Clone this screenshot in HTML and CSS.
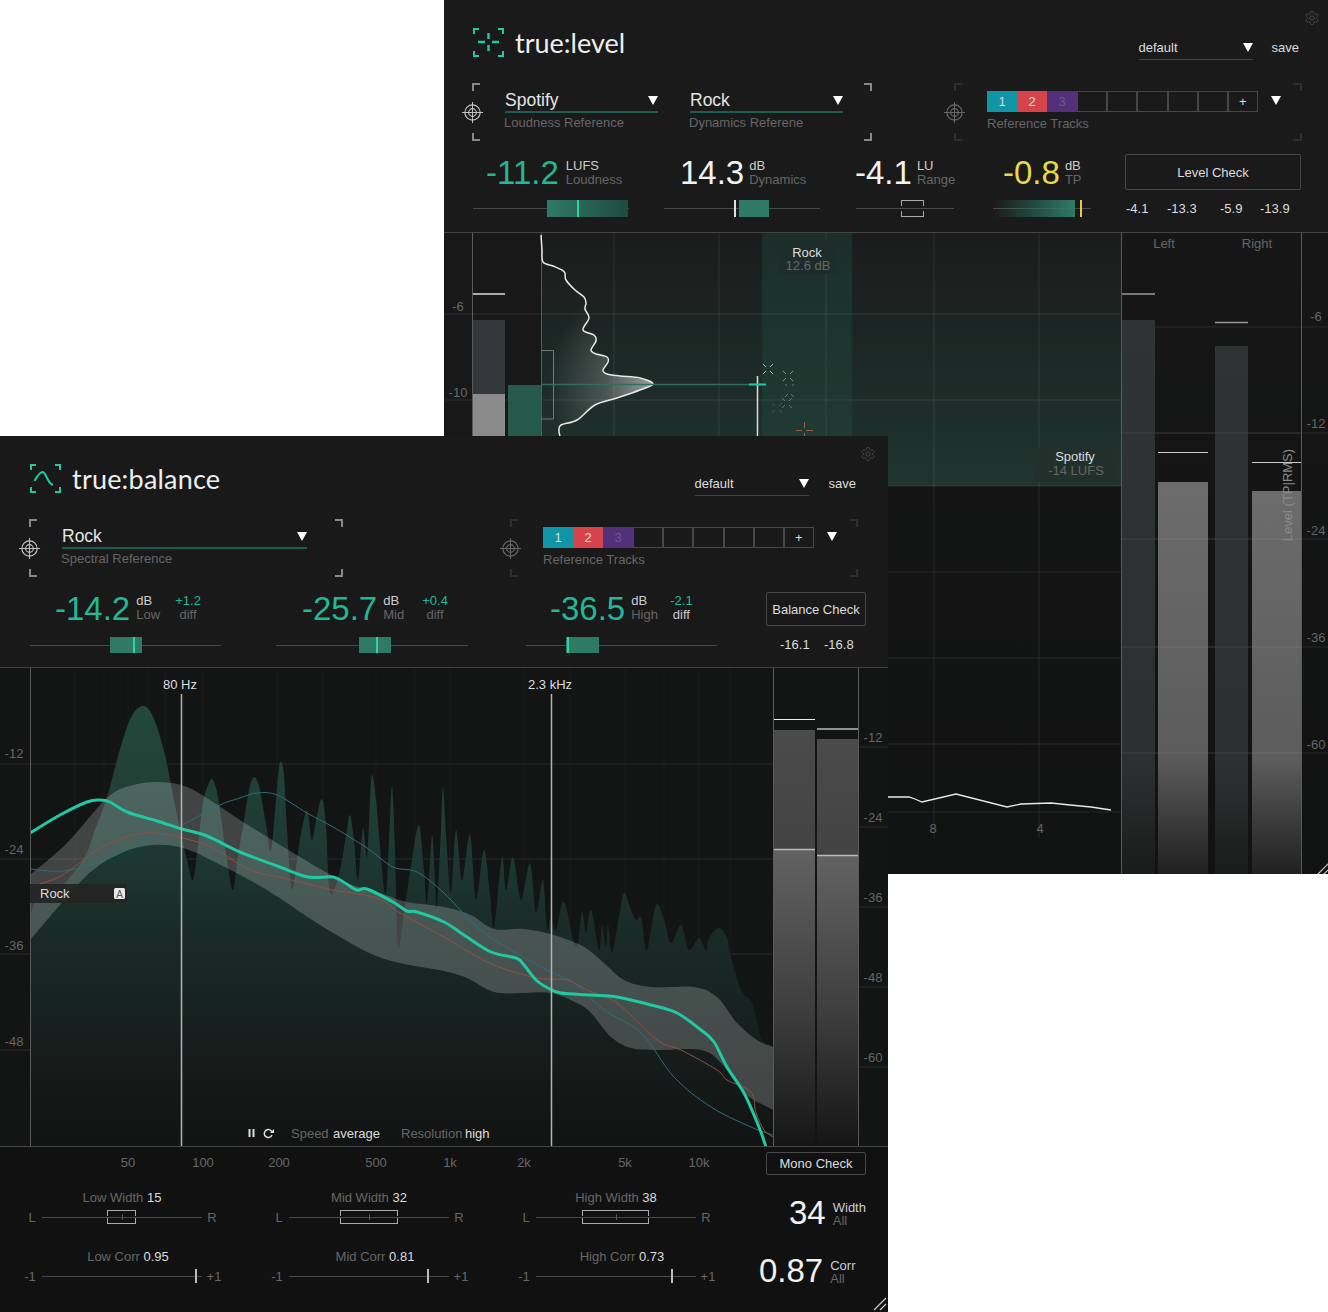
FILE: index.html
```html
<!DOCTYPE html>
<html lang="en">
<head>
    <meta charset="UTF-8">
    <title>true:level and true:balance</title>
    <link rel="stylesheet" href="styles.css">
</head>
<body>
    <svg class="sprite" width="0" height="0">
        <symbol id="target" viewBox="0 0 24 24">
            <circle cx="12" cy="12" r="8" fill="none" stroke="currentColor" stroke-width="1.2"/>
            <circle cx="12" cy="12" r="4" fill="none" stroke="currentColor" stroke-width="1.2"/>
            <path d="M12 1v22M1 12h22" stroke="currentColor" stroke-width="1"/>
        </symbol>
        <symbol id="gear" viewBox="0 0 24 24">
            <path fill="none" stroke="currentColor" stroke-width="1.3" d="M12.22 2h-.44a2 2 0 0 0-2 2v.18a2 2 0 0 1-1 1.73l-.43.25a2 2 0 0 1-2 0l-.15-.08a2 2 0 0 0-2.73.73l-.22.38a2 2 0 0 0 .73 2.73l.15.1a2 2 0 0 1 1 1.72v.51a2 2 0 0 1-1 1.74l-.15.09a2 2 0 0 0-.73 2.73l.22.38a2 2 0 0 0 2.73.73l.15-.08a2 2 0 0 1 2 0l.43.25a2 2 0 0 1 1 1.73V20a2 2 0 0 0 2 2h.44a2 2 0 0 0 2-2v-.18a2 2 0 0 1 1-1.73l.43-.25a2 2 0 0 1 2 0l.15.08a2 2 0 0 0 2.73-.73l.22-.39a2 2 0 0 0-.73-2.73l-.15-.08a2 2 0 0 1-1-1.74v-.5a2 2 0 0 1 1-1.74l.15-.09a2 2 0 0 0 .73-2.73l-.22-.38a2 2 0 0 0-2.73-.73l-.15.08a2 2 0 0 1-2 0l-.43-.25a2 2 0 0 1-1-1.73V4a2 2 0 0 0-2-2z"/>
            <circle cx="12" cy="12" r="3.2" fill="none" stroke="currentColor" stroke-width="1.3"/>
        </symbol>
        <symbol id="grip" viewBox="0 0 14 14">
            <path d="M1 13L13 1M7 13L13 7" stroke="#ccc" stroke-width="1.2"/>
        </symbol>
    </svg>

    <!-- true:level window, sits behind -->
    <section class="win win-level">
        <div class="head">
            <div class="top">
                <div class="logo">
                    <svg width="31" height="29" viewBox="0 0 31 29" fill="none" stroke="#1fc9a1" stroke-width="2">
                        <path d="M1 6V1h5M25 1h5v5M1 23v5h5M25 28h5v-5"/>
                        <path d="M5 14h7M19 14h7M15.500 5v6M15.500 17v6" stroke-width="2.400"/>
                    </svg>
                    <span class="logo-name">true:level</span>
                </div>
                <div class="top-right">
                    <svg class="gear"><use href="#gear"/></svg>
                    <div class="preset-row">
                        <div class="preset"><span>default</span><i class="tri"></i></div>
                        <span class="save">save</span>
                    </div>
                </div>
            </div>

            <div class="refs">
                <div class="corners box-level-a">
                    <svg class="target"><use href="#target"/></svg>
                    <div class="sel">
                        <div class="sel-row"><span>Spotify</span><i class="tri"></i></div>
                        <div class="cap">Loudness Reference</div>
                    </div>
                    <div class="sel">
                        <div class="sel-row"><span>Rock</span><i class="tri"></i></div>
                        <div class="cap">Dynamics Referene</div>
                    </div>
                </div>
                <div class="corners dim box-tracks">
                    <svg class="target"><use href="#target"/></svg>
                    <div class="track-wrap">
                        <div class="tracks">
                            <span class="t1">1</span><span class="t2">2</span><span class="t3">3</span>
                            <span></span><span></span><span></span><span></span><span></span>
                            <span class="add">+</span>
                        </div>
                        <div class="cap">Reference Tracks</div>
                    </div>
                    <i class="tri"></i>
                </div>
            </div>

            <div class="reads reads-level">
                <div class="read">
                    <span class="num teal">-11.2</span>
                    <div class="unit"><b>LUFS</b><span>Loudness</span></div>
                </div>
                <div class="read">
                    <span class="num">14.3</span>
                    <div class="unit"><b>dB</b><span>Dynamics</span></div>
                </div>
                <div class="read">
                    <span class="num">-4.1</span>
                    <div class="unit"><b>LU</b><span>Range</span></div>
                </div>
                <div class="read">
                    <span class="num yellow">-0.8</span>
                    <div class="unit"><b>dB</b><span>TP</span></div>
                </div>
                <button class="check">Level Check</button>
            </div>

            <div class="bars bars-level">
                <div class="slider" style="width:156px"><i class="fill fade-r" style="left:74px;width:81px"></i><i class="tick teal-bg" style="left:104px"></i></div>
                <div class="slider" style="width:156px"><i class="fill" style="left:75px;width:30px"></i><i class="tick" style="left:70px"></i></div>
                <div class="slider" style="width:98px"><i class="range" style="left:45px;width:23px"></i></div>
                <div class="slider" style="width:98px"><i class="fill fade-l" style="left:0;width:82px"></i><i class="tick yellow-bg" style="left:87px"></i></div>
                <div class="vals vals-level"><span>-4.1</span><span>-13.3</span><span>-5.9</span><span>-13.9</span></div>
            </div>
        </div>

        <svg class="plot" width="884" height="641" viewBox="444 233 884 641">
            <defs>
                <linearGradient id="zone" x1="0" y1="0" x2="0" y2="1">
                    <stop offset="0" stop-color="#1a1c1c"/>
                    <stop offset="1" stop-color="#1f352f"/>
                </linearGradient>
                <linearGradient id="rockband" x1="0" y1="0" x2="0" y2="1">
                    <stop offset="0" stop-color="#1b2f2a"/>
                    <stop offset="1" stop-color="#1f3d34"/>
                </linearGradient>
                <linearGradient id="below" x1="0" y1="0" x2="0" y2="1">
                    <stop offset="0" stop-color="#161616"/>
                    <stop offset="1" stop-color="#111212"/>
                </linearGradient>
                <radialGradient id="hump" gradientUnits="userSpaceOnUse" cx="653" cy="384" r="105">
                    <stop offset="0" stop-color="#fff" stop-opacity=".55"/>
                    <stop offset=".45" stop-color="#fff" stop-opacity=".2"/>
                    <stop offset="1" stop-color="#fff" stop-opacity="0"/>
                </radialGradient>
                <linearGradient id="rmsL" x1="0" y1="0" x2="0" y2="1">
                    <stop offset="0" stop-color="#6c6c6c"/>
                    <stop offset=".7" stop-color="#5c5c5c"/>
                    <stop offset="1" stop-color="#202020"/>
                </linearGradient>
                <linearGradient id="tpL" x1="0" y1="0" x2="0" y2="1">
                    <stop offset="0" stop-color="#303334"/>
                    <stop offset=".8" stop-color="#2d3031"/>
                    <stop offset="1" stop-color="#1a1b1b"/>
                </linearGradient>
            </defs>
            <rect x="444" y="233" width="884" height="641" fill="url(#below)"/>
            <rect x="444" y="233" width="97" height="641" fill="#181818"/>
            <rect x="541" y="233" width="580" height="253" fill="url(#zone)"/>
            <rect x="762" y="233" width="90" height="253" fill="url(#rockband)"/>

            <!-- grid -->
            <path class="grid" d="M444 314H1121M444 400H1121M541 486H1121M541 572H1121M888 658H1121M888 744H1121M888 812H1121"/>
            <path class="grid" d="M614 233V874M719 233V874M826 233V874M934 233V838M1039 233V838"/>
            <path class="grid" d="M1121 327H1328M1121 433H1328M1121 539H1328M1121 647H1328M1121 753H1328"/>
            <path class="axis" d="M472.500 233V874M541.500 233V874M1121.500 233V874M1301.500 233V874"/>

            <!-- loudness bars on the left -->
            <rect x="473" y="320" width="32" height="74" fill="#34383a"/>
            <rect x="473" y="394" width="32" height="42" fill="#8b8b8b"/>
            <rect x="508" y="385" width="33" height="51" fill="#27594b"/>
            <path d="M473 294H505" stroke="#ddd" stroke-width="1.500"/>

            <!-- histogram -->
            <path class="smooth" fill="url(#hump)" d="M541 235L543 262L553 266L564 271L566 280L575 290L584 297L586 310L589 318L583 330L594 335L596 341L591 350L607 357L603 370L614 375L635 378L653 384L617 398L595 405L577 420L561 425L559 436L541 436Z"/>
            <path class="smooth" fill="none" stroke="#e8e8e8" stroke-width="1.500" d="M541 235L542 250L543 262L553 266L562 270L565 273L566 280L575 290L584 297L586 303L585 309L589 318L583 330L594 335L596 341L591 350L596 354L607 357L608 362L603 370L607 374L620 376L640 378L653 384L640 390L617 398L595 405L577 420L561 425L559 431L560 436"/>
            <path d="M541 350.500H553.500V419H541" fill="none" stroke="#777" stroke-width="1"/>
            <path d="M541 384.500H762" stroke="#2f6f5d" stroke-width="1.500"/>
            <path d="M757.500 376V436" stroke="#ddd" stroke-width="1.500"/>
            <path d="M749 384.500H766" stroke="#1fc9a1" stroke-width="2"/>

            <!-- history markers -->
            <path class="marks" opacity=".85" d="M763 364l3 3M773 364l-3 3M763 374l3-3M773 374l-3-3"/>
            <path class="marks" opacity=".6" d="M783 371l3 3M793 371l-3 3M783 381l3-3M793 381l-3-3"/>
            <path class="marks" opacity=".45" d="M785 384l2 2M794 384l-2 2M785 397l3-3M794 397l-3-3"/>
            <path class="marks" opacity=".4" d="M782 398l3 3M792 398l-3 3M782 408l3-3M792 408l-3-3"/>
            <path class="marks" opacity=".2" d="M772 403l3 3M782 403l-3 3M772 413l3-3M782 413l-3-3"/>
            <path d="M796 430.500H802M806 430.500H813M804.500 422V428M804.500 433V440" stroke="#9a5a48" stroke-width="1" fill="none"/>

            <!-- labels sitting on the graph -->
            <rect x="778" y="240" width="58" height="34" fill="#1f2d2a"/>
            <text class="lab lt" x="807" y="257" text-anchor="middle">Rock</text>
            <text class="lab dk" x="808" y="270" text-anchor="middle">12.6 dB</text>
            <rect x="1034" y="448" width="82" height="34" fill="#22302c"/>
            <text class="lab lt" x="1075" y="461" text-anchor="middle">Spotify</text>
            <text class="lab dk" x="1076" y="475" text-anchor="middle">-14 LUFS</text>

            <text class="lab dk" x="458" y="311" text-anchor="middle">-6</text>
            <text class="lab dk" x="458" y="397" text-anchor="middle">-10</text>

            <path fill="none" stroke="#e8e8e8" stroke-width="1.300" d="M888 797L909 797L915 799L922 802L956 794L1007 807L1021 804L1051 803L1070 805L1091 807L1111 810"/>
            <text class="lab dk" x="933" y="833" text-anchor="middle">8</text>
            <text class="lab dk" x="1040" y="833" text-anchor="middle">4</text>

            <!-- output meters -->
            <rect x="1122" y="320" width="33" height="554" fill="url(#tpL)"/>
            <rect x="1158" y="482" width="50" height="392" fill="url(#rmsL)"/>
            <rect x="1215" y="346" width="33" height="528" fill="url(#tpL)"/>
            <rect x="1252" y="491" width="49" height="383" fill="url(#rmsL)"/>
            <path d="M1122 294H1155M1215 322.500H1248" stroke="#999" stroke-width="1.500"/>
            <path d="M1158 452.500H1208M1252 462.500H1301" stroke="#ccc" stroke-width="1"/>
            <path class="grid" d="M1121 433H1301M1121 539H1301M1121 647H1301M1121 753H1301"/>
            <text class="lab dk" x="1164" y="248" text-anchor="middle">Left</text>
            <text class="lab dk" x="1257" y="248" text-anchor="middle">Right</text>
            <text class="lab dk" x="1316" y="321" text-anchor="middle">-6</text>
            <text class="lab dk" x="1316" y="428" text-anchor="middle">-12</text>
            <text class="lab dk" x="1316" y="535" text-anchor="middle">-24</text>
            <text class="lab dk" x="1316" y="642" text-anchor="middle">-36</text>
            <text class="lab dk" x="1316" y="749" text-anchor="middle">-60</text>
            <text class="lab side" transform="rotate(-90 1292 495)" x="1292" y="495" text-anchor="middle">Level (TP|RMS)</text>
            <use href="#grip" x="1316" y="862" width="14" height="14"/>
        </svg>
    </section>

    <!-- true:balance window, on top -->
    <section class="win win-balance">
        <div class="head head-balance">
            <div class="top">
                <div class="logo">
                    <svg width="31" height="29" viewBox="0 0 31 29" fill="none" stroke="#1fc9a1" stroke-width="2">
                        <path d="M1 6V1h5M25 1h5v5M1 23v5h5M25 28h5v-5"/>
                        <path d="M5 16C8 11 10 8 12.500 8C16 8 17 18 22 20.500" stroke-width="2.200" stroke-linecap="round"/>
                    </svg>
                    <span class="logo-name">true:balance</span>
                </div>
                <div class="top-right">
                    <svg class="gear"><use href="#gear"/></svg>
                    <div class="preset-row">
                        <div class="preset"><span>default</span><i class="tri"></i></div>
                        <span class="save">save</span>
                    </div>
                </div>
            </div>

            <div class="refs">
                <div class="corners box-balance-a">
                    <svg class="target"><use href="#target"/></svg>
                    <div class="sel sel-wide">
                        <div class="sel-row"><span>Rock</span><i class="tri"></i></div>
                        <div class="cap">Spectral Reference</div>
                    </div>
                </div>
                <div class="corners dim box-tracks">
                    <svg class="target"><use href="#target"/></svg>
                    <div class="track-wrap">
                        <div class="tracks">
                            <span class="t1">1</span><span class="t2">2</span><span class="t3">3</span>
                            <span></span><span></span><span></span><span></span><span></span>
                            <span class="add">+</span>
                        </div>
                        <div class="cap">Reference Tracks</div>
                    </div>
                    <i class="tri"></i>
                </div>
            </div>

            <div class="reads reads-balance">
                <div class="read">
                    <span class="num teal">-14.2</span>
                    <div class="unit fixed"><b>dB</b><span>Low</span></div>
                    <div class="unit diff"><b class="teal">+1.2</b><span>diff</span></div>
                </div>
                <div class="read">
                    <span class="num teal">-25.7</span>
                    <div class="unit fixed"><b>dB</b><span>Mid</span></div>
                    <div class="unit diff"><b class="teal">+0.4</b><span>diff</span></div>
                </div>
                <div class="read">
                    <span class="num teal">-36.5</span>
                    <div class="unit fixed"><b>dB</b><span>High</span></div>
                    <div class="unit diff"><b class="teal">-2.1</b><span class="on">diff</span></div>
                </div>
                <button class="check">Balance Check</button>
            </div>

            <div class="bars bars-balance">
                <div class="slider" style="width:191px"><i class="fill" style="left:80px;width:32px"></i><i class="tick teal-bg" style="left:103px"></i></div>
                <div class="slider" style="width:192px"><i class="fill" style="left:83px;width:32px"></i><i class="tick teal-bg" style="left:100px"></i></div>
                <div class="slider" style="width:191px"><i class="fill" style="left:40px;width:33px"></i><i class="tick teal-bg" style="left:41px"></i></div>
                <div class="vals vals-balance"><span>-16.1</span><span>-16.8</span></div>
            </div>
        </div>

        <svg class="plot" width="888" height="478" viewBox="0 668 888 478">
            <defs>
                <linearGradient id="spec" gradientUnits="userSpaceOnUse" x1="0" y1="700" x2="0" y2="1146">
                    <stop offset="0" stop-color="#24493c"/>
                    <stop offset=".35" stop-color="#1d3832"/>
                    <stop offset=".5" stop-color="#1a2c28"/>
                    <stop offset=".75" stop-color="#161f1d"/>
                    <stop offset="1" stop-color="#121313"/>
                </linearGradient>
                <linearGradient id="upper" x1="0" y1="0" x2="0" y2="1">
                    <stop offset="0" stop-color="#4b4b4b"/>
                    <stop offset="1" stop-color="#434343"/>
                </linearGradient>
                <linearGradient id="lower" x1="0" y1="0" x2="0" y2="1">
                    <stop offset="0" stop-color="#626262"/>
                    <stop offset=".55" stop-color="#3d3d3d"/>
                    <stop offset="1" stop-color="#151515"/>
                </linearGradient>
                <clipPath id="inner">
                    <rect x="30" y="668" width="743" height="478"/>
                </clipPath>
            </defs>
            <rect x="0" y="668" width="888" height="478" fill="#131414"/>

            <path class="grid faint" d="M75 668V1146M104 668V1146M128 668V1146M148 668V1146M165 668V1146M203 668V1146M277 668V1146M323 668V1146M376 668V1146M415 668V1146M450 668V1146M524 668V1146M570 668V1146M625 668V1146M664 668V1146M699 668V1146M730 668V1146"/>
            <path class="grid" d="M0 764H773M0 859H773M0 954H773M0 1050H773"/>
            <path class="grid" d="M773 747H888M773 827H888M773 907H888M773 987H888M773 1067H888"/>

            <g clip-path="url(#inner)">
                <!-- spectrum -->
                <path class="smooth" fill="url(#spec)" d="M30 1170L30 925L55 895L83 860L95 830L107 797L117 760L127 727L135 711L143 706L150 711L157 727L165 755L170 780L176 810L180 830L187 860L193 880L198 845L203 803L208 785L212 779L216 788L220 810L227 860L233 890L238 855L243 827L249 790L254 777L259 786L263 807L267 830L271 850L276 800L279 768L281 762L284 775L287 830L292 890L299 845L305 815L308 813L312 840L317 815L322 799L326 825L330 893L340 870L346 835L350 815L354 840L358 880L363 828L367 857L370 800L372 775L376 800L385 893L389 840L392 787L395 850L398 947L405 905L412 860L419 825L424 870L427 903L432 836L435 880L437 907L441 830L443 788L447 850L451 893L456 830L462 880L470 835L476 900L484 850L490 895L494 927L502 857L506 890L513 857L521 900L530 863L536 913L543 880L547 930L551 917L556 930L564 902L576 947L582 912L586 933L591 910L599 950L602 925L606 947L608 925L612 952L619 917L624 893L631 910L636 920L641 918L647 950L656 905L664 920L671 943L681 925L689 950L699 938L706 950L709 938L719 928L727 938L731 957L741 990L752 1003L761 1037L773 1047L790 1060L790 1170Z"/>

                <!-- reference band -->
                <path class="smooth" fill="#fff" fill-opacity=".2" d="M10 892L30 875L67 843L107 798L133 785L160 782L187 787L213 802L240 820L277 843L317 867L347 883L380 893L407 902L444 907L471 915L494 929L524 929L554 935L584 947L604 963L624 980L651 987L694 987L717 997L737 1023L757 1040L773 1047L790 1054L790 1120L773 1110L744 1093L721 1063L701 1050L657 1050L631 1048L611 1037L591 1013L577 1003L551 993L524 993L494 992L467 978L444 971L400 963L367 952L317 923L267 890L217 863L183 848L153 845L123 852L93 870L67 897L30 940L10 962Z"/>

                <path class="smooth" fill="none" stroke="#2f6d78" stroke-width="1" d="M30 869L63 871L100 862L143 842L182 825L220 805L240 798L257 793L277 795L307 813L333 827L367 848L393 867L417 872L444 893L477 927L511 950L551 972L574 983L604 1010L641 1033L674 1077L711 1107L751 1127L773 1135"/>
                <path class="smooth" fill="none" stroke="#8f5046" stroke-width="1" d="M30 887L57 878L77 865L100 848L133 835L157 833L183 838L213 848L250 870L283 878L333 890L377 898L400 913L444 937L487 962L524 975L544 979L567 980L587 990L617 1003L657 1040L681 1050L717 1070L727 1080L751 1092L756 1113L764 1130L773 1137"/>
                <path class="smooth" fill="none" stroke="#1fc9a1" stroke-width="3" d="M30 833L60 815L87 802L100 800L110 802L127 812L157 821L182 829L207 836L240 852L280 867L308 877L333 877L345 883L357 890L367 889L393 902L407 911L417 912L444 922L464 935L491 952L516 958L524 965L536 980L548 988L561 993L591 995L617 997L651 1005L677 1013L701 1030L714 1042L727 1067L744 1093L759 1127L766 1147"/>
            </g>

            <path class="axis" d="M30.500 668V1146M773.500 668V1146M858.500 668V1146"/>
            <path d="M181.500 694V1146M551.500 694V1146" stroke="#b4b4b4" stroke-width="1.500"/>
            <text class="lab lt" x="180" y="689" text-anchor="middle">80 Hz</text>
            <text class="lab lt" x="550" y="689" text-anchor="middle">2.3 kHz</text>

            <rect x="30" y="884" width="97" height="19" fill="#242424" opacity=".92"/>
            <text class="lab lt" x="40" y="898">Rock</text>
            <rect x="114" y="888" width="11" height="11" rx="1.500" fill="#e8e8e8"/>
            <text class="lab tiny" x="119.500" y="897.500" text-anchor="middle">A</text>

            <!-- meters -->
            <rect x="774" y="730" width="41" height="119" fill="url(#upper)"/>
            <rect x="774" y="849" width="41" height="297" fill="url(#lower)"/>
            <rect x="817" y="739" width="41" height="117" fill="url(#upper)"/>
            <rect x="817" y="856" width="41" height="290" fill="url(#lower)"/>
            <path d="M774 719.500H815" stroke="#eee" stroke-width="1.200"/>
            <path d="M817 729H858M774 849.500H815M817 855.500H858" stroke="#bbb" stroke-width="1.600"/>
            <text class="lab dk" x="14" y="758" text-anchor="middle">-12</text>
            <text class="lab dk" x="14" y="854" text-anchor="middle">-24</text>
            <text class="lab dk" x="14" y="950" text-anchor="middle">-36</text>
            <text class="lab dk" x="14" y="1046" text-anchor="middle">-48</text>
            <text class="lab dk" x="873" y="742" text-anchor="middle">-12</text>
            <text class="lab dk" x="873" y="822" text-anchor="middle">-24</text>
            <text class="lab dk" x="873" y="902" text-anchor="middle">-36</text>
            <text class="lab dk" x="873" y="982" text-anchor="middle">-48</text>
            <text class="lab dk" x="873" y="1062" text-anchor="middle">-60</text>

            <!-- transport -->
            <path d="M249.500 1129V1137M253.500 1129V1137" stroke="#ddd" stroke-width="2"/>
            <path d="M272 1132a4 4 0 1 0 0 3" fill="none" stroke="#ddd" stroke-width="1.500"/>
            <path d="M270 1133h4v-4z" fill="#ddd"/>
            <text class="lab dk" x="291" y="1138">Speed</text>
            <text class="lab lt" x="333" y="1138">average</text>
            <text class="lab dk" x="401" y="1138">Resolution</text>
            <text class="lab lt" x="465" y="1138">high</text>
        </svg>

        <div class="foot">
            <div class="freq">
                <span class="fq" style="left:128px">50</span>
                <span class="fq" style="left:203px">100</span>
                <span class="fq" style="left:279px">200</span>
                <span class="fq" style="left:376px">500</span>
                <span class="fq" style="left:450px">1k</span>
                <span class="fq" style="left:524px">2k</span>
                <span class="fq" style="left:625px">5k</span>
                <span class="fq" style="left:699px">10k</span>
                <button class="check mono">Mono Check</button>
            </div>
            <div class="stereo">
                <div class="ctl">
                    <div class="ctl-name">Low Width <b>15</b></div>
                    <div class="ctl-row"><span>L</span><div class="thin"><i class="range" style="left:65px;width:29px"></i><i class="mini" style="left:80px"></i></div><span>R</span></div>
                </div>
                <div class="ctl">
                    <div class="ctl-name">Mid Width <b>32</b></div>
                    <div class="ctl-row"><span>L</span><div class="thin"><i class="range" style="left:51px;width:58px"></i><i class="mini" style="left:80px"></i></div><span>R</span></div>
                </div>
                <div class="ctl">
                    <div class="ctl-name">High Width <b>38</b></div>
                    <div class="ctl-row"><span>L</span><div class="thin"><i class="range" style="left:46px;width:67px"></i><i class="mini" style="left:80px"></i></div><span>R</span></div>
                </div>
                <div class="total total-width">
                    <span class="num">34</span>
                    <div class="unit"><b>Width</b><span>All</span></div>
                </div>
                <div class="ctl corr">
                    <div class="ctl-name">Low Corr <b>0.95</b></div>
                    <div class="ctl-row"><span>-1</span><div class="thin"><i class="mark" style="left:153px"></i></div><span>+1</span></div>
                </div>
                <div class="ctl corr">
                    <div class="ctl-name">Mid Corr <b>0.81</b></div>
                    <div class="ctl-row"><span>-1</span><div class="thin"><i class="mark" style="left:138px"></i></div><span>+1</span></div>
                </div>
                <div class="ctl corr">
                    <div class="ctl-name">High Corr <b>0.73</b></div>
                    <div class="ctl-row"><span>-1</span><div class="thin"><i class="mark" style="left:135px"></i></div><span>+1</span></div>
                </div>
                <div class="total total-corr">
                    <span class="num">0.87</span>
                    <div class="unit"><b>Corr</b><span>All</span></div>
                </div>
            </div>
            <svg class="grip"><use href="#grip"/></svg>
        </div>
    </section>

    <script src="charts.js"></script>
</body>
</html>
```

FILE: styles.css
```css
/* General Reset */
* {
    margin: 0;
    padding: 0;
    box-sizing: border-box;
}

body {
    position: relative;
    width: 1328px;
    height: 1312px;
    overflow: hidden;
    background: #fff;
    font-family: 'Liberation Sans', Arial, sans-serif;
    font-size: 13px;
    color: #ddd;
}

.sprite {
    position: absolute;
}

i {
    display: block;
    font-style: normal;
}

/* the two plugin windows float on the white page */
.win {
    position: absolute;
    overflow: hidden;
    background: #191919;
}

.win-level {
    left: 444px;
    top: 0;
    width: 884px;
    height: 874px;
}

.win-balance {
    left: 0;
    top: 436px;
    width: 888px;
    height: 876px;
    background: #111;
}

.head {
    height: 233px;
    background: #1a1a1b;
    border-bottom: 1px solid #444;
}

.head-balance {
    height: 232px;
    background: #191919;
}

.plot {
    display: block;
}

/* top bar */
.top {
    display: flex;
    justify-content: space-between;
    height: 83px;
    padding: 10px 8px 0 29px;
}

.head-balance .top {
    padding: 10px 12px 0 30px;
}

.logo {
    display: flex;
    align-items: center;
    gap: 11px;
    height: 29px;
    margin-top: 18px;
}

.logo-name {
    font-family: 'Lato', sans-serif;
    font-size: 27px;
    font-weight: 400;
    color: #eee;
}

.head-balance .logo-name {
    letter-spacing: .2px;
}

.top-right {
    display: flex;
    flex-direction: column;
    align-items: flex-end;
}

.gear {
    width: 16px;
    height: 16px;
    color: #4c4c4c;
}

.preset-row {
    display: flex;
    align-items: flex-start;
    gap: 19px;
    margin: 14px 21px 0 0;
}

.head-balance .preset-row {
    gap: 20px;
    margin-right: 20px;
}

.preset {
    display: flex;
    justify-content: space-between;
    width: 114px;
    height: 20px;
    border-bottom: 1px solid #444;
}

.tri {
    width: 0;
    height: 0;
    margin-top: 3px;
    border-left: 5px solid transparent;
    border-right: 5px solid transparent;
    border-top: 9px solid #fff;
}

.save {
    line-height: 15px;
}

/* reference selectors */
.refs {
    display: flex;
    height: 58px;
    padding-left: 28px;
}

.head-balance .refs {
    padding-left: 29px;
}

.corners {
    --c: #888;
    display: flex;
    background:
        linear-gradient(var(--c), var(--c)) 0 0 / 8px 2px no-repeat,
        linear-gradient(var(--c), var(--c)) 0 0 / 2px 8px no-repeat,
        linear-gradient(var(--c), var(--c)) 100% 0 / 8px 2px no-repeat,
        linear-gradient(var(--c), var(--c)) 100% 0 / 2px 8px no-repeat,
        linear-gradient(var(--c), var(--c)) 0 100% / 8px 2px no-repeat,
        linear-gradient(var(--c), var(--c)) 0 100% / 2px 8px no-repeat,
        linear-gradient(var(--c), var(--c)) 100% 100% / 8px 2px no-repeat,
        linear-gradient(var(--c), var(--c)) 100% 100% / 2px 8px no-repeat;
}

.corners.dim {
    --c: #2f2f2f;
}

.box-level-a {
    width: 400px;
}

.box-balance-a {
    width: 314px;
}

.box-tracks {
    width: 348px;
    margin-left: 82px;
}

.box-balance-a + .box-tracks {
    margin-left: 167px;
    width: 348px;
}

.target {
    flex: none;
    width: 23px;
    height: 23px;
    margin: 18px 21px 0 -11px;
    color: #c4c4c4;
}

.dim .target {
    color: #6a6a6a;
}

.sel {
    flex: none;
    width: 153px;
    margin-right: 32px;
    padding-top: 7px;
}

.sel-wide {
    width: 245px;
}

.sel-row {
    display: flex;
    justify-content: space-between;
    height: 23px;
    font-size: 17.500px;
    line-height: 20px;
    color: #e4e4e4;
    border-bottom: 2px solid #1b5d4e;
}

.sel-row .tri {
    margin-top: 6px;
}

.cap {
    margin: 2px 0 0 -1px;
    line-height: 16px;
    color: #666;
}

.track-wrap {
    flex: none;
    padding-top: 8px;
}

.track-wrap .cap {
    margin: 4px 0 0;
}

.tracks {
    display: grid;
    grid-template-columns: repeat(9, 30.100px);
    height: 21px;
}

.tracks span {
    border: 1px solid #474747;
    text-align: center;
    line-height: 19px;
}

.tracks .t1 {
    background: #0f95a6;
    border-color: #0f95a6;
}

.tracks .t2 {
    background: #d6434b;
    border-color: #d6434b;
}

.tracks .t3 {
    background: #54307a;
    border-color: #54307a;
    color: #6f5a8c;
}

.box-tracks .tri {
    margin: 13px 0 0 13px;
}

/* big readouts */
.reads {
    display: grid;
    height: 34px;
    margin-top: 13px;
}

.reads-level {
    grid-template-columns: 194px 175px 148px 122px 176px;
    padding-left: 42px;
}

.reads-level .read {
    gap: 5px;
    padding-top: 2px;
}

.reads-level .read:first-child {
    gap: 7px;
}

.reads-balance {
    grid-template-columns: 247px 248px 216px 100px;
    height: 33px;
    margin-top: 15px;
    padding-left: 55px;
}

.reads-balance .read {
    gap: 6px;
}

.reads-balance .unit {
    margin-top: -3px;
}

.read,
.total {
    display: flex;
    align-items: center;
    gap: 8px;
}

.num {
    font-size: 33px;
    line-height: 34px;
    color: #f2f2f2;
}

.num.teal {
    color: #22b795;
}

.num.yellow {
    color: #e6d84f;
}

.unit {
    display: flex;
    flex-direction: column;
    line-height: 14px;
}

.unit b {
    font-weight: 400;
    color: #ccc;
}

.unit span {
    color: #666;
}

.unit b.teal {
    color: #22b795;
}

.unit .on {
    color: #ccc;
}

.fixed {
    width: 33px;
}

.diff {
    align-items: center;
}

.check {
    background: none;
    border: 1px solid #484848;
    border-radius: 2px;
    font: inherit;
    color: #ddd;
}

/* slider rows */
.bars {
    display: grid;
    height: 16px;
    margin-top: 12px;
}

.bars-level {
    grid-template-columns: 191px 192px 137px 132px 1fr;
    padding-left: 29px;
}

.bars-balance {
    grid-template-columns: 246px 250px 254px 1fr;
    height: 15px;
    padding-left: 30px;
}

.slider {
    position: relative;
    height: 100%;
    background: linear-gradient(#484848, #484848) 0 50% / 100% 1px no-repeat;
}

.slider i,
.thin i {
    position: absolute;
}

.fill {
    top: 0;
    height: 100%;
    background: #2e7a65;
}

.fade-r {
    background: linear-gradient(90deg, #2e7a65, #1f4a3f);
}

.fade-l {
    background: linear-gradient(90deg, rgba(46, 122, 101, 0), #2e7a65);
}

.tick {
    top: 0;
    width: 2px;
    height: 100%;
    background: #e0e0e0;
}

.teal-bg {
    background: #2ad3aa;
}

.yellow-bg {
    background: #e6c84f;
}

.range {
    top: 0;
    height: 100%;
    border-top: 1px solid #aaa;
    border-bottom: 1px solid #aaa;
    background:
        linear-gradient(#aaa, #aaa) 0 0 / 1px 5px no-repeat,
        linear-gradient(#aaa, #aaa) 100% 0 / 1px 5px no-repeat,
        linear-gradient(#aaa, #aaa) 0 100% / 1px 5px no-repeat,
        linear-gradient(#aaa, #aaa) 100% 100% / 1px 5px no-repeat;
}

.vals {
    display: grid;
    padding-top: 1px;
    line-height: 16px;
}

.vals-level {
    grid-template-columns: 41px 53px 40px auto;
    padding-left: 1px;
}

.vals-balance {
    grid-template-columns: 44px auto;
    padding-top: 0;
}

/* svg bits */
.grid {
    fill: none;
    stroke: #fff;
    stroke-opacity: .09;
    stroke-width: 1;
}

.grid.faint {
    stroke-opacity: .035;
}

.axis {
    fill: none;
    stroke: #5a5a5a;
    stroke-width: 1;
}

.marks {
    fill: none;
    stroke: #ccc;
    stroke-width: 1;
}

.lab {
    font-family: 'Liberation Sans', Arial, sans-serif;
    font-size: 13px;
}

.lab.lt {
    fill: #ddd;
}

.lab.dk {
    fill: #666;
}

.lab.side {
    fill: #8a8a8a;
}

.lab.tiny {
    font-size: 10px;
    fill: #555;
}

/* bottom part of true:balance */
.foot {
    position: relative;
    height: 166px;
    border-top: 1px solid #444;
}

.freq {
    position: relative;
    display: flex;
    justify-content: flex-end;
    height: 33px;
    padding: 5px 22px 0 0;
}

.fq {
    position: absolute;
    top: 8px;
    transform: translateX(-50%);
    line-height: 15px;
    color: #666;
}

.mono {
    width: 100px;
    height: 23px;
}

.stereo {
    display: grid;
    grid-template-columns: 200px 200px 200px 1fr;
    grid-template-rows: 40px 38px;
    column-gap: 47px;
    row-gap: 19px;
    margin-top: 8px;
    padding-left: 22px;
}

.ctl {
    padding-top: 2px;
    text-align: center;
}

.ctl-name {
    line-height: 15px;
    color: #666;
}

.ctl-name b {
    font-weight: 400;
    color: #ddd;
}

.corr .ctl-name {
    padding-left: 12px;
}

.ctl-row {
    display: flex;
    align-items: center;
    height: 20px;
    margin-top: 2px;
    color: #666;
}

.ctl-row span {
    flex: none;
    width: 20px;
}

.corr .ctl-row {
    margin: 2px -4px 0;
}

.corr .ctl-row span {
    width: 24px;
}

.thin {
    position: relative;
    flex: 1;
    height: 14px;
    background: linear-gradient(#484848, #484848) 0 50% / 100% 1px no-repeat;
}

.mini {
    top: 4px;
    width: 1px;
    height: 6px;
    background: #555;
}

.mark {
    top: 0;
    width: 1.500px;
    height: 100%;
    background: #bbb;
}

.total {
    gap: 7px;
    margin: 10px 0 0 -47px;
}

.total-width {
    padding-left: 73px;
}

.total-corr {
    padding-left: 43px;
}

.total .unit {
    line-height: 13px;
    margin-top: 2px;
}

.grip {
    position: absolute;
    right: 1px;
    bottom: 1px;
    width: 14px;
    height: 14px;
}
```

FILE: charts.js
```js
// Turn the point lists of the plots into smooth curves (Catmull-Rom to bezier)
document.querySelectorAll('path.smooth').forEach(function (el) {
    const d = el.getAttribute('d');
    const nums = d.match(/-?[\d.]+/g).map(Number);
    const pts = [];
    for (let i = 0; i < nums.length; i += 2) {
        pts.push([nums[i], nums[i + 1]]);
    }

    let out = 'M' + pts[0][0] + ' ' + pts[0][1];
    for (let i = 0; i < pts.length - 1; i++) {
        const a = pts[i - 1] || pts[i];
        const b = pts[i];
        const c = pts[i + 1];
        const e = pts[i + 2] || c;
        const c1x = b[0] + (c[0] - a[0]) / 6;
        const c1y = b[1] + (c[1] - a[1]) / 6;
        const c2x = c[0] - (e[0] - b[0]) / 6;
        const c2y = c[1] - (e[1] - b[1]) / 6;
        out += 'C' + c1x + ' ' + c1y + ' ' + c2x + ' ' + c2y + ' ' + c[0] + ' ' + c[1];
    }
    el.setAttribute('d', d.endsWith('Z') ? out + 'Z' : out);
});
```
